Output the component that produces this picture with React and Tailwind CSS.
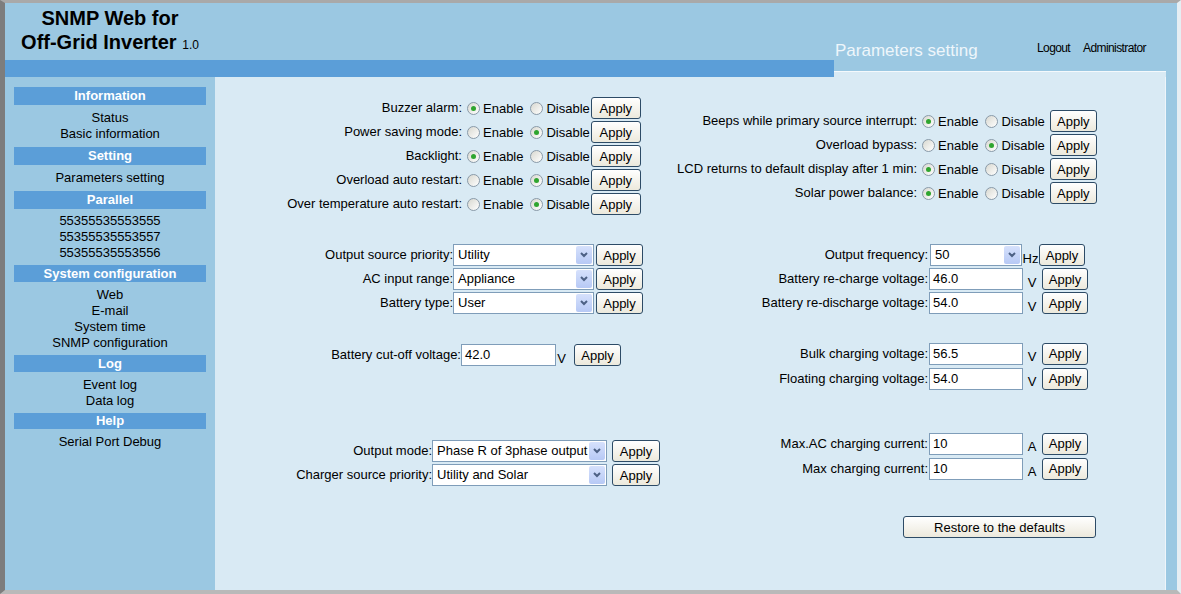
import React from 'react';

// XP style form bits
const Radio = ({ checked }) => (
  <span className="ml-[5px] mr-[3px] w-[13px] h-[13px] shrink-0 rounded-full border border-[#8a9aa8] bg-linear-to-br from-[#d8d8d0] to-white flex items-center justify-center">
    {checked && <span className="w-[5px] h-[5px] rounded-full bg-[#2fa52f]" />}
  </span>
);

const Apply = ({ className = '' }) => (
  <button className={`h-[22px] shrink-0 rounded-[3px] border border-[#2d4b66] bg-linear-to-b from-white to-[#ece9dc] text-[13px] leading-none text-black ${className}`}>
    Apply
  </button>
);

const Select = ({ value, className = '' }) => (
  <div className={`h-[22px] shrink-0 border border-[#7f9db9] bg-white flex items-center ${className}`}>
    <span className="flex-1 pl-[4px] whitespace-nowrap overflow-hidden">{value}</span>
    <span className="w-[16px] h-[18px] mr-[1px] rounded-[2px] bg-linear-to-b from-[#d6e1fc] to-[#b7c9f5] flex items-center justify-center">
      <svg width="8" height="6" viewBox="0 0 8 6">
        <polyline points="1,1 4,4 7,1" fill="none" stroke="#4d6185" strokeWidth="2" />
      </svg>
    </span>
  </div>
);

const Input = ({ value, className = '' }) => (
  <div className={`h-[22px] shrink-0 border border-[#7f9db9] bg-white flex items-center pl-[3px] ${className}`}>{value}</div>
);

const sections = [
  { title: 'Information', hdr: 'h-[18px] leading-[18px]', pad: 'pt-[5px] pb-[5px]', items: ['Status', 'Basic information'] },
  { title: 'Setting', hdr: 'h-[18px] leading-[18px]', pad: 'pt-[5px] pb-[5px]', items: ['Parameters setting'] },
  { title: 'Parallel', hdr: 'h-[18px] leading-[18px]', pad: 'pt-[4px] pb-[4px]', items: ['55355535553555', '55355535553557', '55355535553556'] },
  { title: 'System configuration', hdr: 'h-[17px] leading-[17px]', pad: 'pt-[5px] pb-[4px]', items: ['Web', 'E-mail', 'System time', 'SNMP configuration'] },
  { title: 'Log', hdr: 'h-[17px] leading-[17px]', pad: 'pt-[5px] pb-[4px]', items: ['Event log', 'Data log'] },
  { title: 'Help', hdr: 'h-[16px] leading-[16px]', pad: 'pt-[5px] pb-[4px]', items: ['Serial Port Debug'] },
];

const leftRadios = [
  ['Buzzer alarm:', true],
  ['Power saving mode:', false],
  ['Backlight:', true],
  ['Overload auto restart:', false],
  ['Over temperature auto restart:', false],
];

const rightRadios = [
  ['Beeps while primary source interrupt:', true],
  ['Overload bypass:', false],
  ['LCD returns to default display after 1 min:', true],
  ['Solar power balance:', true],
];

const RadioPair = ({ on }) => (
  <>
    <Radio checked={on} />
    <span className="mr-[2px] translate-y-[1px]">Enable</span>
    <Radio checked={!on} />
    <span className="translate-y-[1px]">Disable</span>
  </>
);

export default function App() {
  return (
    <div className="w-[1181px] h-[594px] overflow-hidden bg-[#9bc8e2] border-l-[5px] border-l-[#7d7d7d] border-t-[3px] border-t-[#a9a9a9] border-b-[4px] border-b-[#b9b9b9] border-r-[4px] border-r-[#e6eef3] flex flex-col font-['Liberation_Sans',Arial,sans-serif] text-[13px] text-black">
      {/* header */}
      <div className="flex h-[74px] shrink-0">
        <div className="w-[829px] flex flex-col">
          <div className="h-[57px] w-[210px] flex flex-col items-center justify-center font-bold text-[20px] leading-[24px]">
            <span>SNMP Web for</span>
            <span>
              Off-Grid Inverter <span className="text-[12px] font-normal">1.0</span>
            </span>
          </div>
          <div className="h-[17px] bg-[#5b9ed8]" />
        </div>
        <div className="w-[332px] flex flex-col">
          <div className="flex-1 flex items-start">
            <span className="mt-[38px] ml-[1px] text-[17px] leading-[20px] text-[#eef6fb]">Parameters setting</span>
            <span className="flex-1" />
            <span className="mt-[38px] text-[12px] leading-[14px] tracking-[-0.6px]">Logout</span>
            <span className="mt-[38px] ml-[13px] mr-[20px] text-[12px] leading-[14px] tracking-[-0.6px]">Administrator</span>
          </div>
          <div className="h-[6px] bg-[#d9eaf4] border-t border-[#f4f9fc]" />
        </div>
        <div className="flex-1" />
      </div>

      {/* body */}
      <div className="flex flex-1 min-h-0">
        <div className="w-[210px] shrink-0 pt-[10px]">
          {sections.map((s) => (
            <div key={s.title}>
              <div className={`mx-[9px] bg-[#5b9ed8] text-white font-bold text-center ${s.hdr}`}>{s.title}</div>
              <div className={`mx-[9px] text-center leading-[16px] ${s.pad}`}>
                {s.items.map((it) => (
                  <div key={it}>{it}</div>
                ))}
              </div>
            </div>
          ))}
        </div>

        <div className="w-[951px] shrink-0 bg-[#d9eaf4] border-r border-[#eef5fa] flex">
          {/* left column */}
          <div className="w-[450px] shrink-0 pt-[19px]">
            <div>
              {leftRadios.map(([label, on]) => (
                <div key={label} className="flex items-center h-[24px]">
                  <span className="w-[247px] text-right whitespace-nowrap">{label}</span>
                  <RadioPair on={on} />
                  <Apply className="ml-[1px] w-[50px]" />
                </div>
              ))}
            </div>

            <div className="mt-[27px]">
              {[
                ['Output source priority:', 'Utility'],
                ['AC input range:', 'Appliance'],
                ['Battery type:', 'User'],
              ].map(([label, val]) => (
                <div key={label} className="flex items-center h-[24px]">
                  <span className="w-[238px] text-right whitespace-nowrap">{label}</span>
                  <Select value={val} className="w-[141px]" />
                  <Apply className="ml-[2px] w-[47px]" />
                </div>
              ))}
            </div>

            <div className="mt-[28px] flex items-center h-[24px]">
              <span className="w-[246px] text-right whitespace-nowrap">Battery cut-off voltage:</span>
              <Input value="42.0" className="w-[95px]" />
              <span className="w-[11px] text-center mt-[6px] leading-[15px]">V</span>
              <Apply className="ml-[7px] w-[47px]" />
            </div>

            <div className="mt-[72px]">
              {[
                ['Output mode:', 'Phase R of 3phase output'],
                ['Charger source priority:', 'Utility and Solar'],
              ].map(([label, val]) => (
                <div key={label} className="flex items-center h-[24px]">
                  <span className="w-[217px] text-right whitespace-nowrap">{label}</span>
                  <Select value={val} className="w-[175px]" />
                  <Apply className="ml-[5px] w-[48px]" />
                </div>
              ))}
            </div>
          </div>

          {/* right column */}
          <div className="flex-1 pt-[32px]">
            <div>
              {rightRadios.map(([label, on]) => (
                <div key={label} className="flex items-center h-[24px]">
                  <span className="w-[252px] text-right whitespace-nowrap">{label}</span>
                  <RadioPair on={on} />
                  <Apply className="ml-[5px] w-[47px]" />
                </div>
              ))}
            </div>

            <div className="mt-[38px]">
              <div className="flex items-center h-[24px]">
                <span className="w-[263px] text-right whitespace-nowrap">Output frequency:</span>
                <Select value="50" className="ml-[2px] w-[92px]" />
                <span className="w-[17px] text-center mt-[6px] leading-[15px]">Hz</span>
                <Apply className="w-[46px]" />
              </div>
              {[
                ['Battery re-charge voltage:', '46.0'],
                ['Battery re-discharge voltage:', '54.0'],
              ].map(([label, val]) => (
                <div key={label} className="flex items-center h-[24px]">
                  <span className="w-[263px] text-right whitespace-nowrap">{label}</span>
                  <Input value={val} className="ml-[1px] w-[94px]" />
                  <span className="w-[18px] text-center mt-[6px] leading-[15px]">V</span>
                  <Apply className="ml-[1px] w-[46px]" />
                </div>
              ))}
            </div>

            <div className="mt-[26px]">
              {[
                ['Bulk charging voltage:', '56.5'],
                ['Floating charging voltage:', '54.0'],
              ].map(([label, val]) => (
                <div key={label} className="flex items-center h-[25px]">
                  <span className="w-[263px] text-right whitespace-nowrap">{label}</span>
                  <Input value={val} className="ml-[1px] w-[94px]" />
                  <span className="w-[18px] text-center mt-[6px] leading-[15px]">V</span>
                  <Apply className="ml-[1px] w-[46px]" />
                </div>
              ))}
            </div>

            <div className="mt-[40px]">
              {[
                ['Max.AC charging current:', '10'],
                ['Max charging current:', '10'],
              ].map(([label, val]) => (
                <div key={label} className="flex items-center h-[25px]">
                  <span className="w-[263px] text-right whitespace-nowrap">{label}</span>
                  <Input value={val} className="ml-[1px] w-[94px]" />
                  <span className="w-[18px] text-center mt-[6px] leading-[15px]">A</span>
                  <Apply className="ml-[1px] w-[46px]" />
                </div>
              ))}
            </div>

            <button className="mt-[35px] ml-[238px] w-[193px] h-[22px] rounded-[3px] border border-[#2d4b66] bg-linear-to-b from-white to-[#ece9dc] text-[13px] leading-none">
              Restore to the defaults
            </button>
          </div>
        </div>
        <div className="flex-1" />
      </div>
    </div>
  );
}
